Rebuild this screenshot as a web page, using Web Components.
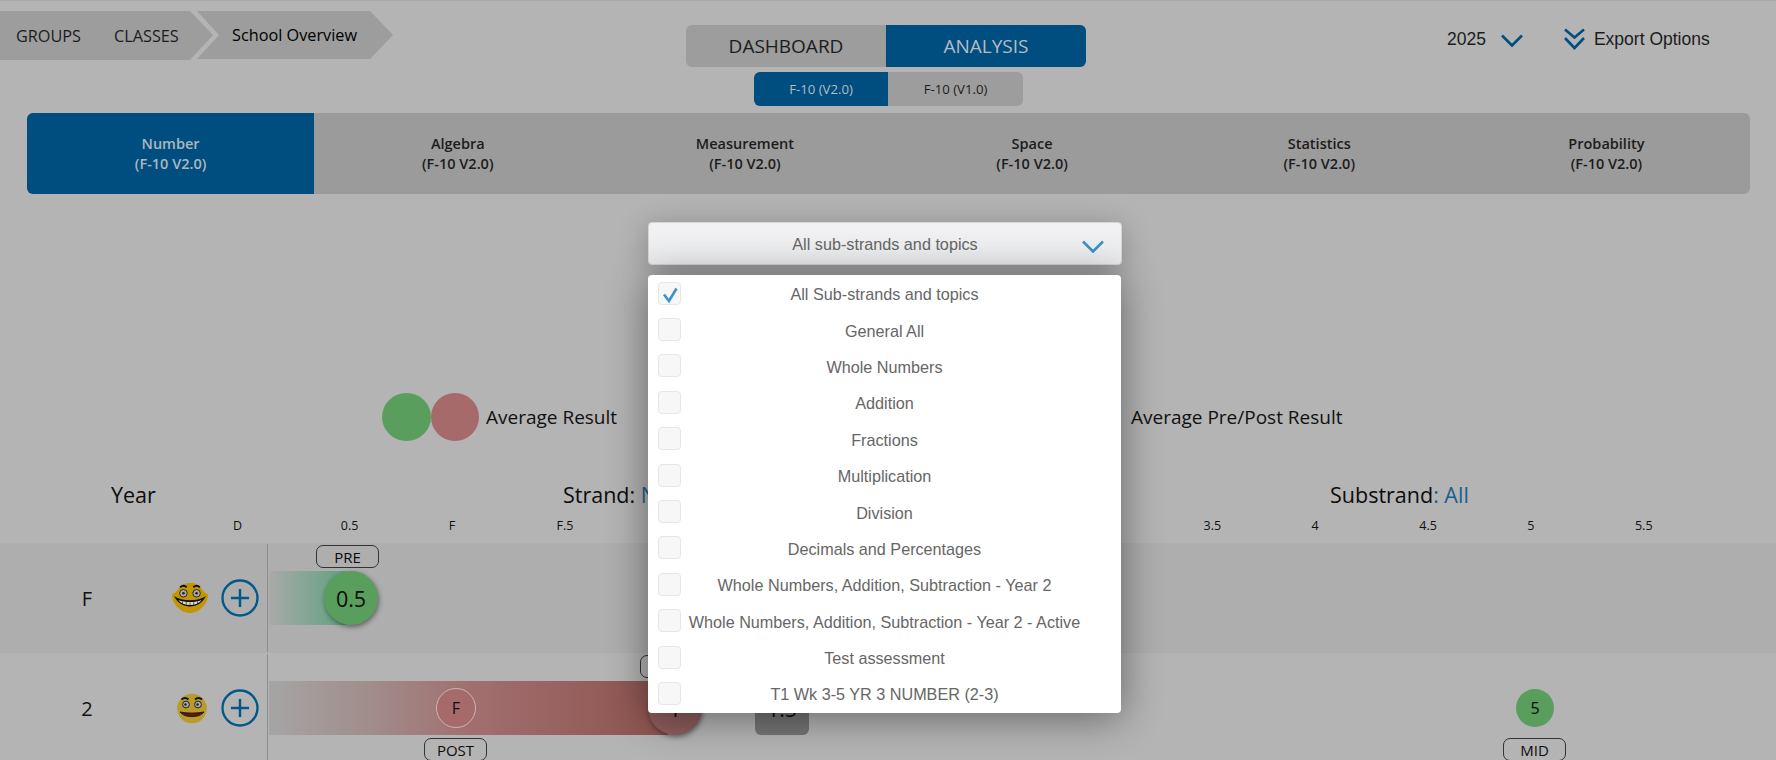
<!DOCTYPE html>
<html lang="en">
<head>
<meta charset="utf-8">
<title>School Overview</title>
<style>
	html, body { margin: 0; height: 760px; overflow: hidden; }
	body { background: #b4b4b4; border-top: 1px solid #a9a9a9; box-sizing: border-box; font-family: "Open Sans", sans-serif; color: #111; }
</style>
</head>
<body>
	<school-header></school-header>
	<strand-tabs></strand-tabs>
	<topic-select></topic-select>
	<result-legend></result-legend>
	<chart-heading></chart-heading>
	<chart-scale></chart-scale>
	<chart-row label="F" face="grin" band>
		<chart-marker kind="bar" from="1" to="78" tone="green"></chart-marker>
		<chart-marker kind="tag" at="48" top="1">PRE</chart-marker>
		<chart-marker kind="big" at="56" tone="green">0.5</chart-marker>
	</chart-row>
	<chart-row label="2" face="smile">
		<chart-marker kind="bar" from="1" to="400" tone="red"></chart-marker>
		<chart-marker kind="small" at="168" tone="red">F</chart-marker>
		<chart-marker kind="tag" at="156" top="84">POST</chart-marker>
		<chart-marker kind="tag" at="372" top="1"></chart-marker>
		<chart-marker kind="big" at="380" tone="red">1</chart-marker>
		<chart-marker kind="square" at="487">1.5</chart-marker>
		<chart-marker kind="dot" at="1248" tone="green">5</chart-marker>
		<chart-marker kind="tag" at="1235" top="84">MID</chart-marker>
	</chart-row>

<script>
	/**
	 * Top bar: breadcrumb, the two view toggles, year and export.
	 */
	class SchoolHeader extends HTMLElement {
		constructor() {
			super();
			const shadow = this.attachShadow({ mode: 'open' });
			shadow.innerHTML = `
	<style>
	:host { display: grid; grid-template-columns: 686px 400px 1fr; height: 112px; }
	.crumbs { display: flex; margin-top: 10px; height: 49px; font-size: 16.25px; }
	.crumb { display: flex; align-items: center; background: #9d9d9d; color: #1c1c1c; }
	.first {
		width: 213px; padding-left: 16px; gap: 33px; box-sizing: border-box;
		clip-path: polygon(0 0, 190px 0, 213px 24px, 190px 49px, 0 49px);
	}
	.second {
		width: 196px; height: 48px; margin-left: -16px; padding-left: 35px; box-sizing: border-box;
		clip-path: polygon(0 0, 173px 0, 196px 24px, 173px 48px, 0 48px, 22px 24px);
		color: #000;
	}
	.views { padding-top: 24px; }
	.seg { display: flex; border-radius: 6px; overflow: hidden; background: #9d9d9d; }
	.seg span { display: flex; align-items: center; justify-content: center; color: #1c1c1c; }
	.seg .on { background: #004e80; color: #b5bcc2; }
	.main { height: 42px; font-size: 19px; }
	.main span { width: 200px; }
	.sub { width: 269px; height: 34px; margin: 5px 0 0 68px; font-size: 13.2px; }
	.sub span { width: 134px; }
	.sub span + span { flex: 1; }
	.tools {
		display: flex; align-items: flex-start; padding: 28px 0 0 361px;
		font: 17.5px/20px "Liberation Sans", sans-serif; color: #1c1c1c;
	}
	.tools svg { display: block; fill: none; stroke: #004e80; stroke-width: 2.6; }
	.year-arrow { margin: 5px 0 0 15px; }
	.export-arrow { margin: -1px 9px 0 41px; }
	</style>
	<div class="crumbs">
		<div class="crumb first"><span>GROUPS</span><span>CLASSES</span></div>
		<div class="crumb second">School Overview</div>
	</div>
	<div class="views">
		<div class="seg main"><span>DASHBOARD</span><span class="on">ANALYSIS</span></div>
		<div class="seg sub"><span class="on">F-10 (V2.0)</span><span>F-10 (V1.0)</span></div>
	</div>
	<div class="tools">
		<span>2025</span>
		<svg class="year-arrow" width="22" height="13" viewBox="0 0 22 13"><path d="M1 1.5l10 10 10-10"/></svg>
		<svg class="export-arrow" width="21" height="22" viewBox="0 0 21 22"><path d="M1 1.5l9.500 8 9.500-8M1 10l9.500 10L20 10"/></svg>
		<span>Export Options</span>
	</div>
			`;
		}
	}
	customElements.define('school-header', SchoolHeader);

	/**
	 * The six strands, first one selected.
	 */
	class StrandTabs extends HTMLElement {
		constructor() {
			super();
			const shadow = this.attachShadow({ mode: 'open' });
			const names = ['Number', 'Algebra', 'Measurement', 'Space', 'Statistics', 'Probability'];
			const tabs = names.map((name, i) =>
				`<div class="tab${i === 0 ? ' on' : ''}"><span>${name}</span><span>(F-10 V2.0)</span></div>`).join('');
			shadow.innerHTML = `
	<style>
	:host {
		display: grid; grid-template-columns: repeat(6, 1fr); height: 81px; margin: 0 26px 0 27px;
		background: #9b9b9b; border-radius: 6px; overflow: hidden;
	}
	.tab {
		display: flex; flex-direction: column; align-items: center; justify-content: center;
		font-size: 14.5px; line-height: 20px; font-weight: 600; color: #1c1c1c;
	}
	.on { background: #004e80; color: #aeb6bd; }
	</style>
	${tabs}
			`;
		}
	}
	customElements.define('strand-tabs', StrandTabs);

	/**
	 * Sub-strand dropdown, shown open with its list over the page.
	 */
	class TopicSelect extends HTMLElement {
		constructor() {
			super();
			const shadow = this.attachShadow({ mode: 'open' });
			const topics = ['All Sub-strands and topics', 'General All', 'Whole Numbers', 'Addition', 'Fractions',
				'Multiplication', 'Division', 'Decimals and Percentages', 'Whole Numbers, Addition, Subtraction - Year 2',
				'Whole Numbers, Addition, Subtraction - Year 2 - Active', 'Test assessment', 'T1 Wk 3-5 YR 3 NUMBER (2-3)'];
			const rows = topics.map((topic, i) => `
		<div class="row">
			<span class="box">${i === 0 ? '<svg width="23" height="23" viewBox="0 0 23 23"><path d="M6 12.500l5 6.500 7.500-12.500" fill="none" stroke="#3a93c9" stroke-width="2.600"/></svg>' : ''}</span>
			<span class="name">${topic}</span>
		</div>`).join('');
			shadow.innerHTML = `
	<style>
	:host {
		display: block; position: relative; z-index: 5; width: 474px; margin: 28px 0 0 648px;
		font: 16.2px "Liberation Sans", sans-serif; color: #666;
	}
	.button {
		display: flex; align-items: center; justify-content: center; position: relative; height: 43px; box-sizing: border-box;
		padding-top: 2px;
		background: linear-gradient(#f1f1f3, #ecedef); border: 1px solid #d6d6d6; border-radius: 4px;
		box-shadow: 0 4px 30px rgba(0,0,0,.25);
	}
	.button svg { position: absolute; right: 17px; top: 17px; fill: none; stroke: #3a93c9; stroke-width: 2.6; }
	.list {
		position: absolute; left: 0; top: 53px; width: 473px; height: 438px; box-sizing: border-box;
		background: #fff; border-radius: 4px; box-shadow: 0 4px 40px rgba(0,0,0,.45);
	}
	.row { display: grid; grid-template-columns: 1fr auto 1fr; align-items: center; height: 36.4px; white-space: nowrap; }
	.name { padding-top: 2px; }
	.row + .row .name { padding-top: 3px; }
	.box {
		display: block; width: 23px; height: 23px; margin-left: 10px; box-sizing: border-box; position: relative;
		background: #f7f7f7; border: 1px solid #e6e6e6; border-radius: 4px;
	}
	.box svg { position: absolute; left: -1px; top: -1px; }
	</style>
	<div class="button">All sub-strands and topics
		<svg width="22" height="13" viewBox="0 0 22 13"><path d="M1 1.5l10 10 10-10"/></svg>
	</div>
	<div class="list">${rows}</div>
			`;
		}
	}
	customElements.define('topic-select', TopicSelect);

	/**
	 * Legend line under the dropdown.
	 */
	class ResultLegend extends HTMLElement {
		constructor() {
			super();
			const shadow = this.attachShadow({ mode: 'open' });
			shadow.innerHTML = `
	<style>
	:host { display: flex; align-items: center; height: 48px; margin-top: 128px; padding-left: 382px; font-size: 19px; color: #111; }
	i { display: block; width: 49px; height: 48px; border-radius: 50%; background: #5a9e5e; }
	i + i { width: 48px; background: #a66a6a; }
	.pre { margin-left: 514px; }
	span:first-of-type { margin-left: 7px; width: 131px; white-space: nowrap; }
	</style>
	<i></i><i></i><span>Average Result</span><span class="pre">Average Pre/Post Result</span>
			`;
		}
	}
	customElements.define('result-legend', ResultLegend);

	/**
	 * Year, Strand and Substrand titles above the chart.
	 */
	class ChartHeading extends HTMLElement {
		constructor() {
			super();
			const shadow = this.attachShadow({ mode: 'open' });
			shadow.innerHTML = `
	<style>
	:host { display: grid; grid-template-columns: 452px 767px 1fr; height: 28px; margin-top: 40px; padding-left: 111px; font-size: 21.5px; line-height: 28px; color: #0c0c0c; }
	b { font-weight: 400; color: #1a5f8f; }
	</style>
	<span>Year</span><span>Strand: <b>Number</b></span><span>Substrand<b>: All</b></span>
			`;
		}
	}
	customElements.define('chart-heading', ChartHeading);

	/**
	 * Row of level labels, one every 108px or so. The blank cells sit under the open list.
	 */
	class ChartScale extends HTMLElement {
		constructor() {
			super();
			const shadow = this.attachShadow({ mode: 'open' });
			const levels = ['D', '0.5', 'F', 'F.5', '', '', '', '', '', '3.5', '4', '4.5', '5', '5.5'];
			shadow.innerHTML = `
	<style>
	:host { display: grid; grid-template-columns: repeat(14, 107.85px); height: 16px; margin: 9px 0; padding-left: 233px; font-size: 12.5px; line-height: 16px; color: #111; }
	</style>
	${levels.map(level => `<span>${level}</span>`).join('')}
			`;
		}
	}
	customElements.define('chart-scale', ChartScale);

	/**
	 * One year in the chart: label, face, plus button and a track for the markers.
	 */
	class ChartRow extends HTMLElement {
		constructor() {
			super();
			const shadow = this.attachShadow({ mode: 'open' });
			const grin = `<svg class="face" width="38" height="32" viewBox="0 0 40 34">
				<path d="M1 13c3-1 5-3 6-5C10 3 15 1 20 1s10 2 13 7c1 2 3 4 6 5 1 8-8 20-19 20S0 21 1 13z" fill="#c29600"/>
				<path d="M9.500 5.500q3.500-3 7 0M23.500 5.500q3.500-3 7 0" fill="none" stroke="#111" stroke-width="2"/>
				<circle cx="13" cy="12" r="4" fill="#a9a9a9" stroke="#222"/><circle cx="13" cy="12" r="1.400" fill="#222"/>
				<circle cx="27" cy="12" r="4" fill="#a9a9a9" stroke="#222"/><circle cx="27" cy="12" r="1.400" fill="#222"/>
				<path d="M3 15c8 6 26 6 34 0-4 8-10 11-17 11S7 23 3 15z" fill="#111"/>
				<path d="M7.500 19c7 3 18 3 25 0-3 3.500-7 5.500-12.500 5.500S10.500 22.500 7.500 19z" fill="#d9d9d9"/>
				<path d="M12 20.500v3M16 21v3.500M20 21.500v3M24 21v3.500M28 20.500v3" stroke="#222" stroke-width=".7"/>
			</svg>`;
			const smile = `<svg class="face" width="30" height="31" viewBox="0 0 30 31">
				<circle cx="15" cy="15.500" r="14.800" fill="#b89c2a"/>
				<path d="M4.500 6.500q3.500-3 7 0M18 6.500q3.500-3 7 0" fill="none" stroke="#111" stroke-width="2"/>
				<circle cx="9" cy="11.500" r="3.400" fill="#a9a9a9" stroke="#222"/><circle cx="8.500" cy="11.500" r="1.200" fill="#222"/>
				<circle cx="21" cy="11.500" r="3.400" fill="#a9a9a9" stroke="#222"/><circle cx="20.500" cy="11.500" r="1.200" fill="#222"/>
				<path d="M3 19c7 1.500 17 1.500 24 0-3 3.500-7 4.500-12 4.500S6 22.500 3 19z" fill="#6b1710" stroke="#111" stroke-width=".9"/>
			</svg>`;
			const isGrin = this.getAttribute('face') === 'grin';
			shadow.innerHTML = `
	<style>
	:host { display: grid; grid-template-columns: 174px 47px 46px 1fr; align-items: center; height: 110px; font-size: 20px; color: #111; }
	:host([band]) { background: #aeaeae; }
	.label { text-align: center; }
	.face { display: block; margin-left: ${isGrin ? -3 : 3}px; }
	.plus { display: block; }
	.track { position: relative; align-self: stretch; margin: 1px 0; border-left: 1px solid #8e8e8e; }
	</style>
	<span class="label">${this.getAttribute('label')}</span>
	${isGrin ? grin : smile}
	<svg class="plus" width="38" height="38" viewBox="0 0 38 38" fill="none" stroke="#00598a">
		<circle cx="19" cy="19" r="17.500" stroke-width="2.300"/><path d="M19 10v18M10 19h18" stroke-width="2.500"/>
	</svg>
	<div class="track"><slot></slot></div>
			`;
		}
	}
	customElements.define('chart-row', ChartRow);

	/**
	 * Anything placed on a track. Its place along the level scale is the data,
	 * so this one is positioned from attributes.
	 */
	class ChartMarker extends HTMLElement {
		constructor() {
			super();
			const shadow = this.attachShadow({ mode: 'open' });
			const kind = this.getAttribute('kind');
			const at = this.getAttribute('at');
			const top = this.getAttribute('top');
			let place = '';
			if (kind === 'bar') {
				place = `left:${this.getAttribute('from')}px;width:${this.getAttribute('to') - this.getAttribute('from')}px;`;
			} else {
				place = `left:${at}px;` + (top ? `top:${top}px;` : '');
			}
			shadow.innerHTML = `
	<style>
	:host { position: absolute; ${place} display: flex; align-items: center; justify-content: center; box-sizing: border-box; color: #0c0c0c; }
	:host([kind=bar]) { top: 27px; height: 54px; }
	:host([kind=bar][tone=green]) { background: linear-gradient(90deg, #a9aaa9, #6aa387 85%); }
	:host([kind=bar][tone=red]) { background: linear-gradient(90deg, #a5a5a5, #a08a88 28%, #a26f6f 50%, #8f5652 95%); }
	:host([kind=tag]) { width: 63px; height: 23px; border: 1px solid #333; border-radius: 7px; font-size: 15px; }
	:host([kind=big]) { top: 27px; width: 54px; height: 54px; border-radius: 50%; font-size: 21.5px; box-shadow: 1px 2px 5px rgba(0,0,0,.45); }
	:host([kind=big][tone=green]) { background: #5a9e5e; }
	:host([kind=big][tone=red]) { background: #8f5c5c; }
	:host([kind=small]) { top: 34px; width: 40px; height: 40px; border-radius: 50%; background: #a66a6a; border: 1px solid #c9b6b6; font-size: 16px; }
	:host([kind=square]) { top: 27px; width: 54px; height: 54px; border-radius: 6px; background: #757575; font-size: 21.5px; }
	:host([kind=dot]) { top: 35px; width: 38px; height: 38px; border-radius: 50%; background: #5a9e5e; font-size: 16px; }
	</style>
	<slot></slot>
			`;
		}
	}
	customElements.define('chart-marker', ChartMarker);
</script>
</body>
</html>
